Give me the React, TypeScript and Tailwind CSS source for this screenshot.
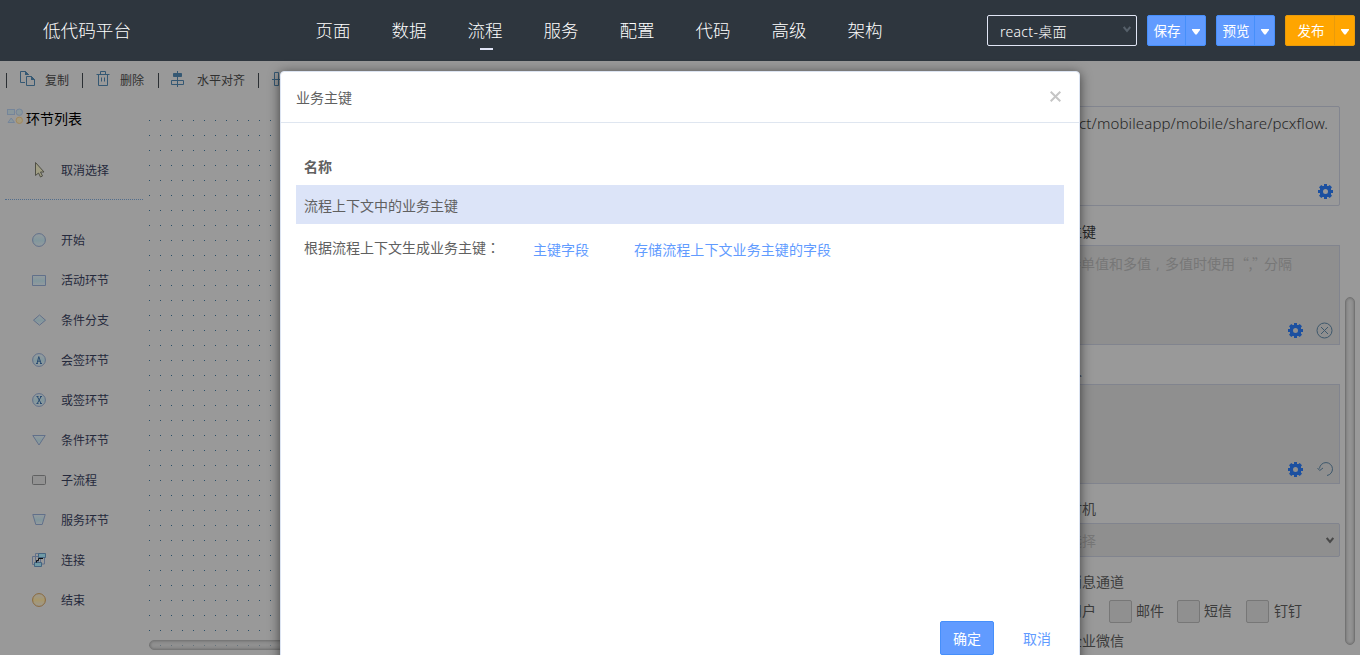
import React from "react";

const nav = ["页面", "数据", "流程", "服务", "配置", "代码", "高级", "架构"];

function Gear() {
  return (
    <svg width="15" height="15" viewBox="0 0 15 15" fill="#1c50a0" fillRule="evenodd">
      <path d="M6 0h3v2h1.500l1.200-1L14 3.300 13 4.500V6h2v3h-2v1.500l1 1.200-2.300 2.300-1.200-1H9v2H6v-2H4.500l-1.200 1L1 11.700l1-1.200V9H0V6h2V4.500L1 3.300 3.300 1l1.200 1H6zM7.500 5a2.500 2.500 0 1 0 0 5 2.500 2.500 0 0 0 0-5z" />
    </svg>
  );
}

function Chevron({ color }: { color: string }) {
  return (
    <svg width="8" height="7" viewBox="0 0 8 7" fill="none" stroke={color} strokeWidth="2">
      <path d="M.7 1 4 5 7.3 1" />
    </svg>
  );
}

function Divider() {
  return <span className="h-[15px] w-px bg-[#2b2f33]" />;
}

function SplitButton({ label, orange = false }: { label: string; orange?: boolean }) {
  return (
    <div
      className={
        orange
          ? "flex h-[31px] w-[70px] rounded-[2px] border border-[#e89b0c] bg-[#ffa500]"
          : "flex h-[31px] w-[59px] rounded-[2px] border border-[#468ffb] bg-[#619bff]"
      }
    >
      <span className={orange ? "flex flex-1 items-center justify-center border-r border-[#e89b0c] pl-0.5 pt-px" : "flex flex-1 items-center justify-center border-r border-[#468ffb] pl-px pt-px"}>
        {label}
      </span>
      <span className="flex w-[19px] items-center justify-center pt-0.5">
        <svg width="8" height="6" viewBox="0 0 8 6" fill="#fff">
          <path d="M0 0h8v1L4.7 5.4H3.3L0 1z" />
        </svg>
      </span>
    </div>
  );
}

const steps = [
  { label: "开始", kind: "start" },
  { label: "活动环节", kind: "rect" },
  { label: "条件分支", kind: "diamond" },
  { label: "会签环节", kind: "a" },
  { label: "或签环节", kind: "x" },
  { label: "条件环节", kind: "triangle" },
  { label: "子流程", kind: "sub" },
  { label: "服务环节", kind: "trapezoid" },
  { label: "连接", kind: "link" },
  { label: "结束", kind: "end" },
];

function StepIcon({ kind }: { kind: string }) {
  const line = "#61708a";
  return (
    <svg width="14" height="14" viewBox="0 0 14 14" fill="url(#soft)" stroke={line}>
      <defs>
        <linearGradient id="soft" x1="0" y1="0" x2="0" y2="1">
          <stop offset="0" stopColor="#959b9e" />
          <stop offset=".55" stopColor="#82979d" />
          <stop offset="1" stopColor="#959b9e" />
        </linearGradient>
        <linearGradient id="gold" x1="0" y1="0" x2="0" y2="1">
          <stop offset="0" stopColor="#9b9892" />
          <stop offset=".5" stopColor="#a8986c" />
          <stop offset="1" stopColor="#9b9892" />
        </linearGradient>
      </defs>
      {(kind === "start" || kind === "a" || kind === "x") && <circle cx="7" cy="7" r="6.4" />}
      {kind === "a" && (
        <path d="M4 10.500h2M8 10.500h2M5 10.500 6.800 3.600l2.200 6.900M5.700 8.200h2.800" fill="none" stroke="#294b70" />
      )}
      {kind === "x" && (
        <path d="M4.500 3.500h2M8 3.500h2M4.500 10.500h2M8 10.500h2M5.300 3.500l3.800 7M9.100 3.500l-3.800 7" fill="none" stroke="#294b70" />
      )}
      {kind === "rect" && <path d="M.5 2.500h13v10H.5z" />}
      {kind === "diamond" && <path d="M7.500 2 13.500 7.200l-6 5-6-5z" />}
      {kind === "triangle" && <path d="M.8 2.500h12.400L7 12z" />}
      {kind === "sub" && <rect x=".5" y="2.500" width="13" height="9" rx="1" fill="#929292" stroke="#606162" />}
      {kind === "trapezoid" && <path d="M.8 1.500h12.400l-3 10H3.800z" />}
      {kind === "link" && (
        <g fill="none">
          <path d="M.5 3.500h8v8h-8zM3.500.5h3v8h-3zM12.500 5v6H9" />
          <path d="M6.500.5h7v4h-7z" fill="#6f9aa6" stroke="#456480" />
          <path d="M2.500 9.500h7v4h-7z" fill="#6f9aa6" stroke="#456480" />
          <path d="M11 5.500H6.500v2h-2v2" stroke="#070b0e" />
        </g>
      )}
      {kind === "end" && <circle cx="7" cy="7" r="6.4" fill="url(#gold)" stroke="#8b693a" />}
    </svg>
  );
}

function Check({ label, className }: { label: string; className: string }) {
  return (
    <div className={className}>
      <span className="h-[23px] w-[23px] rounded-[2px] border border-[#777777] bg-[#909090]" />
      {label}
    </div>
  );
}

function Header() {
  return (
    <header className="flex h-[61px] shrink-0 bg-[#2e363e] font-light text-white">
      <div className="w-[295px] pl-[43px] text-[17.6px] leading-[61px]">低代码平台</div>
      <nav className="flex w-[692px] text-[17.5px]">
        {nav.map((item) => (
          <div key={item} className="flex w-[76px] flex-col items-center">
            <span className="pt-[16px] leading-[28px]">{item}</span>
            {item === "流程" && <span className="ml-0.5 mt-1 h-0.5 w-[13px] bg-[#e0e4f5]" />}
          </div>
        ))}
      </nav>
      <div className="flex pt-[15px] text-[14px]">
        <div className="flex h-[31px] w-[150px] items-center justify-between rounded-[2px] border border-[#e1e6f5] pl-3 pr-[5px]">
          <span className="pt-0.5 tracking-[0.3px]">react-桌面</span>
          <span className="pb-0.5"><Chevron color="#56606a" /></span>
        </div>
        <div className="ml-2.5 flex gap-2.5 text-[13.5px] font-normal">
          <SplitButton label="保存" />
          <SplitButton label="预览" />
          <SplitButton label="发布" orange />
        </div>
      </div>
    </header>
  );
}

function Toolbar() {
  return (
    <div className="flex h-[38px] shrink-0 items-center pl-1.5 text-[12px] text-[#303030]">
      <Divider />
      <svg className="mb-0.5 ml-3 mr-[9px]" width="17" height="18" viewBox="0 0 17 18" fill="none" stroke="#355873">
        <path d="M6 12.500H1.500V1.500h5L9.500 4.500M7.500 6.500h5l3 3v6h-8zM6.500 1.500v3h3M12.500 6.500v3h3" />
        <path d="M6 1l4 4H6zM12 6l4 4h-4z" fill="#355873" stroke="none" />
      </svg>
      <span className="w-[37px] pt-0.5">复制</span>
      <Divider />
      <svg className="mb-0.5 ml-[13px] mr-[10px]" width="14" height="18" viewBox="0 0 14 18" fill="none" stroke="#355873">
        <path d="M.500 4.500h13M4.500 4v-2.500h5V4M2.500 4.500v11h9v-11M5.500 7.500v4M8.500 7.500v4" />
      </svg>
      <span className="w-[38px] pt-0.5">删除</span>
      <Divider />
      <svg className="mb-0.5 ml-[11px] mr-[13px]" width="14" height="18" viewBox="0 0 14 18" fill="none" stroke="#355873">
        <path d="M7.500 1v16M1.500 10.500h12v4h-12z" />
        <path d="M3.500 3.500h8v3h-8z" fill="#355873" />
      </svg>
      <span className="w-[61px] pt-0.5">水平对齐</span>
      <Divider />
      <svg className="mb-0.5 ml-[13px]" width="18" height="18" viewBox="0 0 18 18" fill="none" stroke="#355873">
        <path d="M2.500 2.500h4v13h-4zM0 9.500h10" />
      </svg>
    </div>
  );
}

function Sidebar() {
  return (
    <aside className="w-[149px] shrink-0">
      <div className="flex h-[39px] items-center pl-[7px] text-[14px] text-black">
        <svg className="mb-1 mr-[3px] shrink-0" width="16" height="17" viewBox="0 0 16 17" fill="#8a979c" stroke="#75859a">
          <rect x=".5" y="1.500" width="7" height="5" />
          <circle cx="12.300" cy="4.200" r="3.200" />
          <path d="M1 14.500h6.500L4.200 10z" />
          <circle cx="12.300" cy="12.300" r="3.200" fill="#a59a7c" stroke="#a1885e" />
        </svg>
        环节列表
      </div>
      <div className="ml-[5px] mr-1.5 flex h-[62px] items-center border-b border-dotted border-[#526d8c] pl-[29px] pt-1 text-[12px] text-[#25293c]">
        <svg className="mb-0.5 mr-[16px]" width="11" height="18" viewBox="0 0 11 18" fill="#a09e84" stroke="#4f4f45">
          <path d="M1.500 1.500v13L4.500 12l2 4 2-1-2-4H10z" />
        </svg>
        取消选择
      </div>
      <div className="pt-5">
        {steps.map((step) => (
          <div key={step.label} className="flex h-10 items-center pl-8 text-[12px] text-[#25293c]">
            <StepIcon kind={step.kind} />
            <span className="ml-[15px] pt-0.5">{step.label}</span>
          </div>
        ))}
      </div>
    </aside>
  );
}

function Properties() {
  return (
    <section className="w-[320px] shrink-0 text-[14px] text-[#3c3c3c]">
      <div className="mt-[45px] flex h-[100px] w-[300px] flex-col justify-between rounded-[2px] border border-[#82858f]">
        <div className="flex h-[33px] items-center justify-end pr-[11px] text-[15px] font-light tracking-[0.13px] text-[#262626]">ct/mobileapp/mobile/share/pcxflow.</div>
        <div className="flex justify-end pb-1.5 pr-1.5"><Gear /></div>
      </div>
      <div className="h-[39px] pt-[14px] leading-6 text-[#262626]">业务主键</div>
      <div className="flex h-[100px] w-[300px] flex-col justify-between border border-[#81848e] bg-[#8f8f8f]">
        <div className="flex h-[34px] items-center whitespace-pre pl-3 text-[#777]">
          支持单值和多值<span className="w-3.5 pl-[5px]">,</span>多值时使用<span className="w-[29px] font-['Noto_Sans_CJK_SC',sans-serif] tracking-[-0.5px]">“,”</span>分隔
        </div>
        <div className="flex items-center justify-end gap-[13px] pb-[5px] pr-1.5">
          <Gear />
          <svg width="17" height="17" viewBox="0 0 17 17" fill="none" stroke="#3e586c">
            <circle cx="8.500" cy="8.500" r="7.500" /><path d="m5 5 7 7M12 5l-7 7" />
          </svg>
        </div>
      </div>
      <div className="h-[39px] pt-[14px] leading-6">处理人</div>
      <div className="flex h-[100px] w-[300px] items-end justify-end gap-[14px] border border-[#81848e] bg-[#8f8f8f] pb-1.5 pr-[5px]">
        <Gear />
        <svg width="17" height="17" viewBox="0 0 17 17" fill="none" stroke="#3e586c">
          <path d="M2.500 8.500A6.500 6.500 0 1 1 10 15.500M.500 8l2.200 2.500L6 8" />
        </svg>
      </div>
      <div className="h-[39px] pt-[13px] leading-6">触发时机</div>
      <div className="flex h-[34px] w-[300px] items-center justify-between rounded-[2px] border border-[#81848e] bg-[#8f8f8f] pl-[13px] pr-[5px] text-[#777]">
        请选择<Chevron color="#484848" />
      </div>
      <div className="h-[42px] pl-7 pt-[13px] leading-6">消息通道</div>
      <div className="flex h-6 items-center leading-[22px]">
        <span className="w-[69px] pl-7">用户</span>
        <Check label="邮件" className="flex w-[68px] items-center gap-1" />
        <Check label="短信" className="flex w-[69px] items-center gap-1" />
        <Check label="钉钉" className="flex items-center gap-[5px]" />
      </div>
      <div className="pl-7 pt-1.5 leading-6">企业微信</div>
    </section>
  );
}

function Dialog() {
  return (
    <div className="absolute left-[280px] top-[71px] flex h-[600px] w-[800px] flex-col rounded-t-[4px] border border-[#dce4f2] bg-white text-[14px] text-[#606060] shadow-[0_2px_12px_rgba(0,0,0,0.6)]">
      <div className="flex h-[51px] items-center justify-between border-b border-[#dfe6f0] pl-[15px] pr-[18px]">
        <span className="pt-px">业务主键</span>
        <svg className="mb-px" width="11" height="11" viewBox="0 0 11 11" stroke="#c5c5c5" strokeWidth="2"><path d="m.7.700 9.600 9.600M10.300.700.700 10.300" /></svg>
      </div>
      <div className="flex h-[498px] flex-col px-[15px] pt-[27px]">
        <div className="h-[35px] pl-2 pt-[5px] font-bold leading-6">名称</div>
        <div className="flex h-[39px] items-center bg-[#dce4f8] pl-2 pt-0.5">流程上下文中的业务主键</div>
        <div className="flex pl-2 pt-3 leading-6">
          <span className="-mt-px w-[229px]">根据流程上下文生成业务主键<span className="font-['Noto_Sans_CJK_TC',sans-serif]">：</span></span>
          <span className="w-[101px] pt-0.5 text-[#619bff]">主键字段</span>
          <span className="pt-0.5 tracking-[0.08px] text-[#619bff]">存储流程上下文业务主键的字段</span>
        </div>
      </div>
      <div className="flex items-center justify-end pr-7">
        <div className="flex h-[34px] w-[54px] items-center justify-center rounded-[2px] border border-[#468ffb] bg-[#619bff] text-white">确定</div>
        <span className="ml-[29px] text-[#619bff]">取消</span>
      </div>
    </div>
  );
}

export default function App() {
  return (
    <div className="relative flex h-[655px] w-[1360px] flex-col overflow-hidden bg-[#999999] font-['Noto_Sans','Noto_Sans_CJK_SC',sans-serif] font-normal">
      <Header />
      <main className="flex h-[594px]">
        <div className="flex w-[1040px] shrink-0 flex-col">
          <Toolbar />
          <div className="flex flex-1">
            <Sidebar />
            <div className="flex flex-1 flex-col pb-[5px] pt-[21px]">
              <div className="flex flex-1 flex-col justify-end bg-[radial-gradient(circle_at_0.5px_0.5px,#294f68_0.6px,transparent_0.7px)] bg-[length:11px_15px]">
                <div className="h-2.5 rounded-l-full border border-[#777] bg-[#8a8a8a]/60 shadow-[inset_0_0_3px_#666]" />
              </div>
            </div>
          </div>
        </div>
        <Properties />
      </main>
      <div className="absolute left-[1345px] top-[297px] h-[348px] w-2.5 rounded-full border border-[#737373] bg-[#939393] shadow-[inset_0_0_3px_#666]" />
      <Dialog />
    </div>
  );
}
